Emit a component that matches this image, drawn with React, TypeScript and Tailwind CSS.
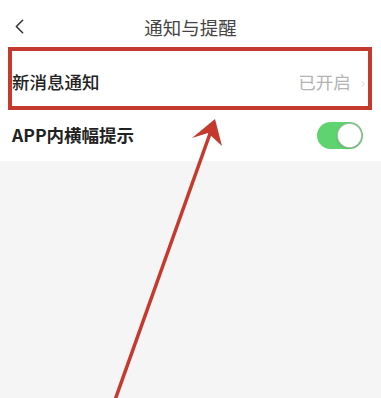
import { ChevronLeft } from 'lucide-react'

const font = { fontFamily: '"Noto Sans CJK SC", "Noto Sans", sans-serif' }

function Toggle() {
  return (
    <div className="w-[46px] h-[27px] rounded-full bg-[#5ed36f] flex items-center justify-end px-[1px]">
      <div className="w-[25px] h-[25px] rounded-full bg-white border border-[#8a8a8a]/60 shadow-sm" />
    </div>
  )
}

export default function App() {
  return (
    <div className="relative w-[381px] h-[398px] overflow-hidden bg-[#f5f5f5]" style={font}>
      <div className="bg-white">
        <div className="h-[55px] flex items-center relative">
          <ChevronLeft className="absolute left-[7px] top-[14px] text-[#333]" size={25} strokeWidth={1.5} />
          <h1 className="flex-1 text-center text-[18.5px] text-[#444]">通知与提醒</h1>
        </div>

        <div className="h-[54px] flex items-center justify-between pl-[12px] pr-[16px]">
          <span className="text-[17.5px] font-medium text-[#222]">新消息通知</span>
          <div className="flex items-center gap-[10px]">
            <span className="text-[17.5px] text-[#b4b4b4]">已开启</span>
            <span className="text-[14px] text-[#dcdcdc]">›</span>
          </div>
        </div>

        <div className="h-[52px] flex items-center justify-between pl-[12px] pr-[18px]">
          <span className="text-[17.5px] font-semibold text-[#222]">APP内横幅提示</span>
          <Toggle />
        </div>
      </div>

      {/* red annotation box */}
      <div className="absolute left-[8px] top-[47px] w-[364px] h-[63px] border-[4px] border-[#c53a2e]" />

      {/* red arrow */}
      <svg className="absolute inset-0" width="381" height="398" viewBox="0 0 381 398">
        <line x1="212" y1="128" x2="115" y2="400" stroke="#c53a2e" strokeWidth="3.5" />
        <path d="M215 119 L192 138 L208 133 L222 146 Z" fill="#c53a2e" />
      </svg>
    </div>
  )
}
